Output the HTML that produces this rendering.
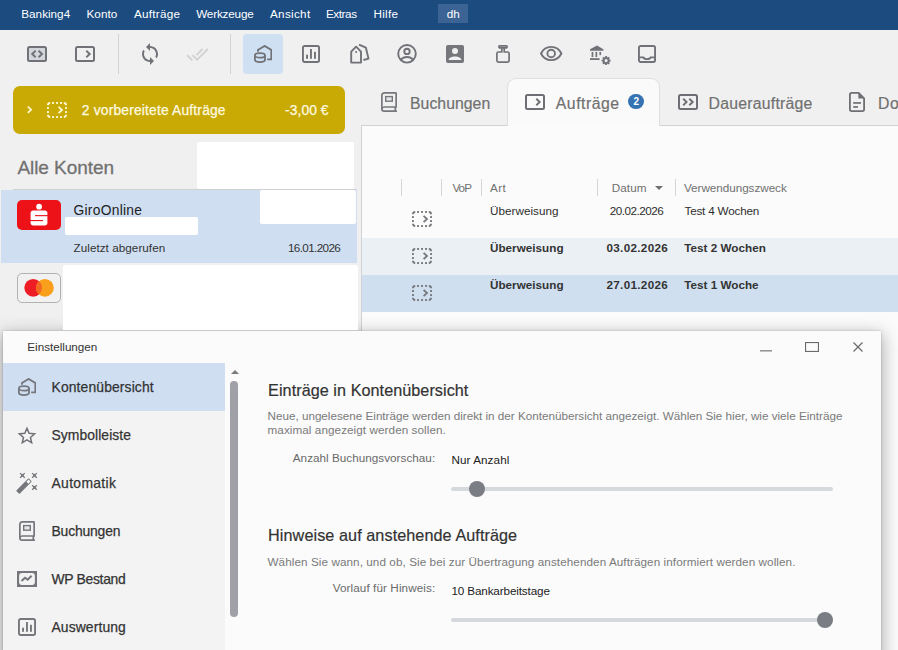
<!DOCTYPE html>
<html lang="de"><head><meta charset="utf-8"><title>Banking4 - Einstellungen</title>
<style>
html,body{margin:0;padding:0}
body{width:898px;height:650px;overflow:hidden;position:relative;background:#f0f0f0;font-family:"Liberation Sans",sans-serif;}
.a{position:absolute}
.t{position:absolute;white-space:nowrap;display:block}
svg{position:absolute;overflow:visible}
#menubar{left:0;top:0;width:898px;height:30px;background:#1c4b80}
#user{left:438px;top:4px;width:30px;height:19px;background:#3b6494}
.tsep{width:1px;top:34px;height:40px;background:#d2d2d2}
#tbsel{left:243px;top:34px;width:40px;height:40px;border-radius:4px;background:#cfe0f3}
#banner{left:13px;top:86px;width:332px;height:48px;border-radius:7px;background:#c9a904}
#panel{left:361px;top:125px;width:540px;height:530px;background:#fbfbfb;border-left:1px solid #d0d2d4;border-top:1px solid #d0d2d4;box-sizing:border-box}
#tabact{left:507px;top:78px;width:153px;height:48px;background:#fafafa;border:1px solid #dedede;border-bottom:none;border-radius:9px 9px 0 0;box-sizing:border-box}
#badge{left:628.3px;top:94px;width:15.3px;height:15.3px;border-radius:50%;background:#3572b2}
.w{background:#fff}
#accsel{left:1px;top:190px;width:356px;height:73px;background:#cfdff1}
#acctop{left:13px;top:189px;width:344px;height:1px;background:#d0d0d0}
#sp{left:17px;top:199.5px;width:44px;height:30.5px;border-radius:5px;background:#ec1217}
#mc{left:17px;top:273px;width:44px;height:30px;border-radius:5px;background:#f1f1f1;border:1px solid #b2b2b2;box-sizing:border-box}
.hsep{width:1px;top:179px;height:17px;background:#d6d6d6}
#row2{left:362px;top:238px;width:540px;height:37px;background:#ebf0f5}
#row3{left:362px;top:275px;width:540px;height:37px;background:#cfdff0}
#dlg{left:3px;top:331px;width:878px;height:330px;background:#fbfbfb;box-shadow:0 5px 16px 2px rgba(0,0,0,.30),0 0 2px rgba(0,0,0,.22)}
#nav{left:3px;top:363px;width:222px;height:300px;background:#f3f3f3}
#navsel{left:3px;top:363px;width:222px;height:48px;background:#cfdff1}
#thumb{left:230px;top:381px;width:8px;height:236px;border-radius:4px;background:#a0a1a8}
.trk{left:451px;width:382px;height:4px;border-radius:2px;background:#d5d8dc}
.knob{width:16px;height:16px;border-radius:50%;background:#7b7d84}
</style></head><body>
<div class="a" id="menubar"></div>
<div class="a" id="user"></div>
<div class="a tsep" style="left:118px"></div>
<div class="a tsep" style="left:230px"></div>
<div class="a" id="tbsel"></div>
<div class="a" id="banner"></div>
<div class="a" id="panel"></div>
<div class="a" id="tabact"></div>
<div class="a" id="badge"></div>
<div class="a" id="acctop"></div>
<div class="a" id="accsel"></div>
<div class="a w" style="left:197px;top:142px;width:157px;height:46.5px;border-radius:2px"></div>
<div class="a w" style="left:260px;top:190px;width:95.5px;height:34px;border-radius:2px"></div>
<div class="a w" style="left:65px;top:216.5px;width:133px;height:18.5px;border-radius:2px"></div>
<div class="a" id="sp"></div>
<div class="a" id="mc"></div>
<div class="a hsep" style="left:401px"></div>
<div class="a hsep" style="left:441px"></div>
<div class="a hsep" style="left:481px"></div>
<div class="a hsep" style="left:597px"></div>
<div class="a hsep" style="left:675px"></div>
<div class="a" id="row2"></div>
<div class="a" id="row3"></div>
<div class="a" id="dlg"></div>
<div class="a w" style="left:63px;top:265px;width:295px;height:65px;border-radius:2px 2px 0 0"></div>
<div class="a" id="nav"></div>
<div class="a" id="navsel"></div>
<div class="a" id="thumb"></div>
<div class="a trk" style="top:487px"></div>
<div class="a knob" style="left:469px;top:481px"></div>
<div class="a trk" style="top:618px"></div>
<div class="a knob" style="left:817px;top:612px"></div>
<svg width="0" height="0" style="position:absolute">
<defs>
<!-- rectangle w/ chevron(s), 20x16 box -->
<symbol id="rc1" viewBox="0 0 20 16"><rect x="1" y="1" width="18" height="14" rx="1.5" fill="none" stroke="currentColor" stroke-width="2"/><path d="M11.3 4.8 14.7 8 11.3 11.2" fill="none" stroke="currentColor" stroke-width="1.9"/></symbol>
<symbol id="rc2" viewBox="0 0 20 16"><rect x="1" y="1" width="18" height="14" rx="1.5" fill="none" stroke="currentColor" stroke-width="2"/><path d="M5.2 4.8 8.6 8 5.2 11.2M11.3 4.8 14.7 8 11.3 11.2" fill="none" stroke="currentColor" stroke-width="1.9"/></symbol>
<symbol id="rc0" viewBox="0 0 20 16"><rect x="1" y="1" width="18" height="14" rx="1.5" fill="#d3d6da" stroke="currentColor" stroke-width="2"/><path d="M8.6 4.8 5.2 8 8.6 11.2M11.6 4.8 15 8 11.6 11.2" fill="none" stroke="currentColor" stroke-width="1.9"/></symbol>
<!-- dotted box w/ chevron 20x16 -->
<symbol id="dot" viewBox="0 0 20 16">
<g fill="currentColor">
<rect x="5.1" y="0" width="1.9" height="1.9"/><rect x="9.1" y="0" width="1.9" height="1.9"/><rect x="13.1" y="0" width="1.9" height="1.9"/>
<rect x="5.1" y="14.1" width="1.9" height="1.9"/><rect x="9.1" y="14.1" width="1.9" height="1.9"/><rect x="13.1" y="14.1" width="1.9" height="1.9"/>
<rect x="0" y="5.1" width="1.9" height="1.9"/><rect x="0" y="9.1" width="1.9" height="1.9"/>
<rect x="18.1" y="5.1" width="1.9" height="1.9"/><rect x="18.1" y="9.1" width="1.9" height="1.9"/>

<g fill="none" stroke="currentColor" stroke-width="1.9"><path d="M.95 3.2A2.3 2.3 0 0 1 3.2 .95M16.8 .95A2.3 2.3 0 0 1 19.05 3.2M19.05 12.8A2.3 2.3 0 0 1 16.8 15.05M3.2 15.05A2.3 2.3 0 0 1 .95 12.8"/>
<path d="M11.6 4.8 15 8 11.6 11.2" stroke-width="1.8"/></g>
</symbol>
<!-- accounts: house + coins, 18x18 -->
<symbol id="acc" viewBox="0 0 18 18"><g fill="none" stroke="currentColor" stroke-width="1.8">
<path d="M3.9 6.700V5.000L10.600 .900 17.300 5.000V14.300H13.200" stroke-linejoin="miter"/>
<ellipse cx="5.950" cy="10.400" rx="5.050" ry="2.250"/>
<path d="M.900 10.400V14.800A5.050 2.250 0 0 0 11.000 14.800V10.400"/>
</g></symbol>
<!-- bar chart in box 18x18 -->
<symbol id="bar" viewBox="0 0 18 18"><rect x=".95" y=".95" width="16.100" height="16.100" rx="1.700" fill="none" stroke="currentColor" stroke-width="1.900"/>
<g fill="currentColor"><rect x="4.1" y="9.7" width="1.9" height="4.1"/><rect x="8.0" y="4.0" width="1.9" height="9.8"/><rect x="12.0" y="6.8" width="1.9" height="7"/></g></symbol>
<!-- book 17x20 -->
<symbol id="book" viewBox="0 0 16 20"><g fill="none" stroke="currentColor" stroke-width="1.7">
<path d="M15.15 .85H3.3A2.45 2.45 0 0 0 .85 3.3V16.7A2.45 2.45 0 0 0 3.3 19.15H15.9"/>
<path d="M15.15 .4V15H3.2A2.3 2.3 0 0 0 .9 16.9"/>
<path d="M14.3 15V19.2"/>
<rect x="4.7" y="4.6" width="6.6" height="4.6" stroke-width="1.4" fill="#e6e7e9"/>
</g></symbol>
</defs></svg>

<!-- toolbar -->

<svg style="left:27px;top:46px;color:#707277" width="20" height="16"><use href="#rc0"/></svg>
<svg style="left:75px;top:46px;color:#707277" width="20" height="16"><use href="#rc1"/></svg>
<!-- sync -->
<svg style="left:138px;top:42px" width="24" height="24" viewBox="0 0 24 24"><path fill="#707277" d="M12 4V1L8 5l4 4V6c3.31 0 6 2.69 6 6 0 1.01-.25 1.97-.7 2.8l1.46 1.46C19.54 15.03 20 13.57 20 12c0-4.42-3.58-8-8-8zm0 14c-3.31 0-6-2.69-6-6 0-1.01.25-1.97.7-2.8L5.24 7.74C4.46 8.970 4 10.43 4 12c0 4.420 3.58 8 8 8v3l4-4-4-4v3z"/></svg>
<!-- done all (disabled) -->
<svg style="left:186.400px;top:42.900px" width="22.9" height="22.9" viewBox="0 0 24 24"><path fill="#d2d2d2" d="M18 7l-1.410-1.410-6.340 6.340 1.410 1.410L18 7zm4.240-1.410L11.660 16.170 7.480 12l-1.410 1.410L11.660 19l12-12-1.420-1.410zM.410 13.410L6 19l1.410-1.410L1.830 12 .410 13.410z"/></svg>
<svg style="left:254px;top:45px;color:#707277" width="18" height="18"><use href="#acc"/></svg>
<svg style="left:302px;top:45px;color:#707277" width="18" height="18"><use href="#bar"/></svg>
<!-- tags -->
<svg style="left:349px;top:43px" width="22" height="22" viewBox="0 0 22 22"><g fill="none" stroke="#707277" stroke-width="1.900" stroke-linejoin="round">
<path d="M2.200 19.600V8.700L7.100 3.700 12.000 8.700V19.600Z"/>
<path d="M10.0 1.6 16.9 4.7 19.5 15.6 14.4 17.0"/>
</g><circle cx="7.1" cy="8.9" r="1" fill="#707277"/></svg>
<!-- account circle -->
<svg style="left:396px;top:43px" width="22" height="22" viewBox="0 0 22 22"><g fill="none" stroke="#707277" stroke-width="1.900">
<circle cx="11" cy="10.800" r="8.800"/><circle cx="11" cy="8.4" r="2.7"/>
<path d="M4.9 17.0C7.0 12.9 15.0 12.9 17.1 17.0"/></g></svg>
<!-- account box -->
<svg style="left:446px;top:45px" width="18" height="18" viewBox="0 0 18 18"><rect width="18" height="18" rx="2" fill="#75777c"/><circle cx="9" cy="5.9" r="3" fill="#f0f0f0"/><path d="M2.6 14.9C2.6 10.2 15.4 10.2 15.4 14.9Z" fill="#f0f0f0"/></svg>
<!-- stamp -->
<svg style="left:496px;top:45px" width="14" height="18" viewBox="0 0 14 18"><g fill="none" stroke="#707277" stroke-width="1.7" stroke-linejoin="round">
<rect x="3.000" y=".900" width="8.000" height="1.900" rx=".600"/>
<path d="M5.800 2.800V7.000H2.400A1.500 1.500 0 0 0 .900 8.500V15.600A1.500 1.500 0 0 0 2.400 17.100H11.600A1.500 1.500 0 0 0 13.100 15.600V8.500A1.500 1.500 0 0 0 11.600 7.000H8.200V2.800"/>
</g></svg>
<!-- eye -->
<svg style="left:540px;top:46px" width="22.400" height="15" viewBox="0 0 22.400 15"><g fill="none" stroke="#707277" stroke-width="1.900">
<path d="M1.000 7.500C5.200 -1.300 17.200 -1.300 21.400 7.500C17.200 16.300 5.200 16.300 1.000 7.500Z"/><circle cx="11.200" cy="7.500" r="3.800"/></g></svg>
<!-- bank + gear -->
<svg style="left:589px;top:45px" width="22" height="21" viewBox="0 0 22 21"><g fill="#707277">
<path d="M8.000 .500 14.400 4.300V5.800H1.000V4.300Z"/>
<rect x="2.600" y="6.900" width="1.700" height="5.200"/><rect x="6.500" y="6.900" width="1.700" height="5.200"/><rect x="10.400" y="6.900" width="1.700" height="3.200"/>
<rect x="1.000" y="13.200" width="9.600" height="1.800"/>
</g><g transform="translate(17.100 15.600)"><circle r="2.500" fill="none" stroke="#707277" stroke-width="1.900"/><g stroke="#707277" stroke-width="1.900"><path d="M0 -4.500V-2.600M0 4.500V2.600M-4.500 0H-2.600M4.500 0H2.600M-3.180 -3.180-1.900 -1.900M3.180 3.180 1.900 1.900M-3.180 3.180-1.900 1.900M3.180 -3.180 1.900 -1.900"/></g></g></svg>
<!-- inbox -->
<svg style="left:638px;top:45px" width="18" height="18" viewBox="0 0 18 18"><g fill="none" stroke="#707277" stroke-width="1.900"><rect x=".950" y=".950" width="16.100" height="16.100" rx="1.700"/><path d="M.9 12.400H5.300C6.200 14.700 11.800 14.700 12.700 12.400H17.100"/></g></svg>


<!-- banner -->
<svg style="left:26.700px;top:106.300px" width="5.200" height="7.400" viewBox="0 0 5.200 7.400"><path d="M.8 .6 4.200 3.700 .8 6.800" fill="none" stroke="#fff7cf" stroke-width="1.700"/></svg>
<svg style="left:47px;top:102px;color:#fffbd6" width="20" height="16"><use href="#dot"/></svg>

<!-- tabs -->
<svg style="left:381px;top:92px;color:#75777c" width="16" height="20"><use href="#book"/></svg>
<svg style="left:525px;top:94px;color:#6d6f74" width="20" height="16"><use href="#rc1"/></svg>
<svg style="left:678px;top:94px;color:#6d6f74" width="20" height="16"><use href="#rc2"/></svg>
<svg style="left:849px;top:92px" width="16" height="20" viewBox="0 0 16 20"><path d="M9.700 .900H2.700A1.800 1.800 0 0 0 .900 2.700V17.300A1.800 1.800 0 0 0 2.700 19.100H13.300A1.800 1.800 0 0 0 15.100 17.300V6.300Z" fill="none" stroke="#6d6f74" stroke-width="1.800" stroke-linejoin="round"/><path d="M9.400 .9 15.100 6.600H9.400Z" fill="#6d6f74"/><rect x="4.200" y="10.100" width="7.800" height="1.700" fill="#6d6f74"/><rect x="4.200" y="14.100" width="4.800" height="1.700" fill="#6d6f74"/></svg>

<!-- sparkasse -->
<svg style="left:17px;top:199.500px" width="44" height="30" viewBox="0 0 44 30"><circle cx="22.100" cy="6.700" r="2.900" fill="#fff"/><rect x="13.600" y="10.600" width="16.800" height="14.800" rx="2.600" fill="#fff"/><rect x="18" y="15.100" width="13" height="1.100" fill="#ec1217"/><rect x="13" y="20.000" width="13.100" height="1.100" fill="#ec1217"/></svg>
<!-- mastercard -->
<svg style="left:17px;top:273px" width="44" height="30" viewBox="0 0 44 30"><circle cx="16.2" cy="14.8" r="8.9" fill="#ee1c25"/><circle cx="27.9" cy="14.8" r="8.9" fill="#f99f1b"/><path d="M22.05 8.09A8.9 8.9 0 0 1 22.05 21.51A8.9 8.9 0 0 1 22.05 8.09Z" fill="#f26a22"/></svg>

<!-- table -->
<svg style="left:655px;top:186px" width="8" height="4" viewBox="0 0 8 4"><path d="M0 0H8L4 4Z" fill="#707070"/></svg>
<svg style="left:412px;top:211px;color:#76787c" width="20" height="16"><use href="#dot"/></svg>
<svg style="left:412px;top:248px;color:#76787c" width="20" height="16"><use href="#dot"/></svg>
<svg style="left:412px;top:285px;color:#76787c" width="20" height="16"><use href="#dot"/></svg>
<!-- dialog window buttons -->
<svg style="left:760px;top:349.500px" width="12" height="2" viewBox="0 0 12 2"><rect y=".3" width="12" height="1.100" fill="#6a6a6a"/></svg>
<svg style="left:805px;top:342px" width="14" height="10" viewBox="0 0 14 10"><rect x=".550" y=".550" width="12.900" height="8.900" fill="none" stroke="#6a6a6a" stroke-width="1.100"/></svg>
<svg style="left:853px;top:341.900px" width="10" height="10" viewBox="0 0 10 10"><path d="M.5 .5 9.500 9.500M9.500 .5 .5 9.500" fill="none" stroke="#6a6a6a" stroke-width="1.200"/></svg>
<!-- scrollbar arrow -->
<svg style="left:230.500px;top:370px" width="8" height="4" viewBox="0 0 8 4"><path d="M0 4H8L4 0Z" fill="#7b7b7b"/></svg>
<!-- nav icons -->
<svg style="left:18px;top:378px;color:#75777c" width="18" height="18"><use href="#acc"/></svg>
<svg style="left:16.900px;top:425.500px" width="20" height="19" viewBox="0 0 20 19"><path d="M9.95 2.30 12.11 7.32 17.56 7.83 13.45 11.44 14.65 16.77 9.95 13.98 5.25 16.77 6.45 11.44 2.34 7.83 7.79 7.32Z" fill="none" stroke="#707277" stroke-width="1.500" stroke-linejoin="miter"/></svg>
<!-- wand -->
<svg style="left:15px;top:472px" width="22" height="22" viewBox="0 0 22 22"><g transform="translate(8.950 14.100) rotate(-45)"><rect x="-8.850" y="-2.350" width="17.700" height="4.700" rx=".8" fill="#75777c"/><rect x="4.800" y="-1.350" width="3.100" height="2.700" fill="#fafafa"/></g>
<g fill="none" stroke="#75777c" stroke-width="1.300"><path d="M5.10 1.10L9.70 5.70M9.70 1.10L5.10 5.70"/><rect x="6.40" y="2.40" width="2" height="2" fill="#75777c" stroke="none" transform="rotate(45 7.4 3.4)"/><path d="M17.20 1.10L21.80 5.70M21.80 1.10L17.20 5.70"/><rect x="18.50" y="2.40" width="2" height="2" fill="#75777c" stroke="none" transform="rotate(45 19.5 3.4)"/><path d="M17.20 13.20L21.80 17.80M21.80 13.20L17.20 17.80"/><rect x="18.50" y="14.50" width="2" height="2" fill="#75777c" stroke="none" transform="rotate(45 19.5 15.5)"/></g></svg>
<svg style="left:19px;top:521px;color:#75777c" width="16" height="20"><use href="#book"/></svg>
<!-- wp bestand -->
<svg style="left:17px;top:571px" width="20" height="16" viewBox="0 0 20 16"><path fill="#75777c" fill-rule="evenodd" d="M0 0H20V16H0ZM2.100 5A2.900 2.900 0 0 1 5 2.100H15A2.900 2.900 0 0 1 17.900 5V11A2.900 2.900 0 0 1 15 13.900H5A2.900 2.900 0 0 1 2.100 11Z"/><path d="M4.500 9.900 8.000 6.700 10.700 8.600 14.600 4.700" fill="none" stroke="#75777c" stroke-width="2"/></svg>
<svg style="left:18px;top:618px;color:#75777c" width="18" height="18"><use href="#bar"/></svg>

<span class="t" style="left:21.30px;top:6.00px;font-size:11.7px;line-height:16px;letter-spacing:0.014px;color:#ffffff;">Banking4</span>
<span class="t" style="left:86.50px;top:6.00px;font-size:11.7px;line-height:16px;letter-spacing:0.050px;color:#ffffff;">Konto</span>
<span class="t" style="left:134.00px;top:6.00px;font-size:11.7px;line-height:16px;letter-spacing:0.250px;color:#ffffff;">Aufträge</span>
<span class="t" style="left:196.20px;top:6.00px;font-size:11.7px;line-height:16px;letter-spacing:-0.169px;color:#ffffff;">Werkzeuge</span>
<span class="t" style="left:270.00px;top:6.00px;font-size:11.7px;line-height:16px;letter-spacing:0.308px;color:#ffffff;">Ansicht</span>
<span class="t" style="left:326.00px;top:6.00px;font-size:11.7px;line-height:16px;letter-spacing:-0.430px;color:#ffffff;">Extras</span>
<span class="t" style="left:373.40px;top:6.00px;font-size:11.7px;line-height:16px;letter-spacing:0.300px;color:#ffffff;">Hilfe</span>
<span class="t" style="left:446.70px;top:6.00px;font-size:11.7px;line-height:16px;letter-spacing:0.100px;color:#ffffff;">dh</span>
<span class="t" style="left:81.80px;top:101.00px;font-size:13.8px;line-height:19px;letter-spacing:0.189px;color:#fffbe0;-webkit-text-stroke:0.25px #fffbe0;">2 vorbereitete Aufträge</span>
<span class="t" style="left:285.00px;top:101.00px;font-size:13.8px;line-height:19px;letter-spacing:0.092px;color:#fffbe0;-webkit-text-stroke:0.25px #fffbe0;">-3,00 €</span>
<span class="t" style="left:410.00px;top:93.00px;font-size:15.8px;line-height:22px;letter-spacing:0.031px;color:#707070;-webkit-text-stroke:0.2px #707070;">Buchungen</span>
<span class="t" style="left:555.80px;top:93.00px;font-size:15.8px;line-height:22px;letter-spacing:0.507px;color:#707070;-webkit-text-stroke:0.2px #707070;">Aufträge</span>
<span class="t" style="left:633.60px;top:95.00px;font-size:10px;line-height:14px;letter-spacing:0.000px;color:#ffffff;font-weight:700;">2</span>
<span class="t" style="left:708.50px;top:93.00px;font-size:15.8px;line-height:22px;letter-spacing:0.242px;color:#707070;-webkit-text-stroke:0.2px #707070;">Daueraufträge</span>
<span class="t" style="left:878.10px;top:93.00px;font-size:15.8px;line-height:22px;letter-spacing:0.387px;color:#707070;-webkit-text-stroke:0.2px #707070;">Dokumente</span>
<span class="t" style="left:17.40px;top:154.00px;font-size:19px;line-height:27px;letter-spacing:-0.060px;color:#717171;-webkit-text-stroke:0.3px #717171;">Alle Konten</span>
<span class="t" style="left:73.50px;top:201.00px;font-size:13.8px;line-height:19px;letter-spacing:0.283px;color:#222;">GiroOnline</span>
<span class="t" style="left:73.50px;top:240.00px;font-size:11.7px;line-height:16px;letter-spacing:0.047px;color:#333;">Zuletzt abgerufen</span>
<span class="t" style="left:288.00px;top:240.00px;font-size:11.7px;line-height:16px;letter-spacing:-0.639px;color:#333;">16.01.2026</span>
<span class="t" style="left:452.40px;top:180.00px;font-size:11.7px;line-height:16px;letter-spacing:-0.925px;color:#707070;">VoP</span>
<span class="t" style="left:490.00px;top:180.00px;font-size:11.7px;line-height:16px;letter-spacing:0.375px;color:#707070;">Art</span>
<span class="t" style="left:611.70px;top:180.00px;font-size:11.7px;line-height:16px;letter-spacing:0.087px;color:#707070;">Datum</span>
<span class="t" style="left:684.00px;top:180.00px;font-size:11.7px;line-height:16px;letter-spacing:-0.037px;color:#707070;">Verwendungszweck</span>
<span class="t" style="left:490.00px;top:203.00px;font-size:11.7px;line-height:16px;letter-spacing:0.030px;color:#2e2e2e;">Überweisung</span>
<span class="t" style="left:609.70px;top:203.00px;font-size:11.7px;line-height:16px;letter-spacing:-0.494px;color:#2e2e2e;">20.02.2026</span>
<span class="t" style="left:684.50px;top:203.00px;font-size:11.7px;line-height:16px;letter-spacing:-0.192px;color:#2e2e2e;">Test 4 Wochen</span>
<span class="t" style="left:490.00px;top:240.00px;font-size:11.7px;line-height:16px;letter-spacing:0.015px;color:#333;font-weight:700;">Überweisung</span>
<span class="t" style="left:606.50px;top:240.00px;font-size:11.7px;line-height:16px;letter-spacing:0.306px;color:#333;font-weight:700;">03.02.2026</span>
<span class="t" style="left:684.30px;top:240.00px;font-size:11.7px;line-height:16px;letter-spacing:0.008px;color:#333;font-weight:700;">Test 2 Wochen</span>
<span class="t" style="left:490.00px;top:277.00px;font-size:11.7px;line-height:16px;letter-spacing:0.015px;color:#333;font-weight:700;">Überweisung</span>
<span class="t" style="left:606.50px;top:277.00px;font-size:11.7px;line-height:16px;letter-spacing:0.306px;color:#333;font-weight:700;">27.01.2026</span>
<span class="t" style="left:684.30px;top:277.00px;font-size:11.7px;line-height:16px;letter-spacing:0.005px;color:#333;font-weight:700;">Test 1 Woche</span>
<span class="t" style="left:27.30px;top:339.00px;font-size:11.7px;line-height:16px;letter-spacing:-0.012px;color:#333;">Einstellungen</span>
<span class="t" style="left:51.50px;top:378.00px;font-size:13.9px;line-height:19px;letter-spacing:0.125px;color:#333;-webkit-text-stroke:0.25px #333;">Kontenübersicht</span>
<span class="t" style="left:51.50px;top:426.00px;font-size:13.9px;line-height:19px;letter-spacing:0.064px;color:#333;-webkit-text-stroke:0.25px #333;">Symbolleiste</span>
<span class="t" style="left:51.50px;top:474.00px;font-size:13.9px;line-height:19px;letter-spacing:0.331px;color:#333;-webkit-text-stroke:0.25px #333;">Automatik</span>
<span class="t" style="left:51.50px;top:522.00px;font-size:13.9px;line-height:19px;letter-spacing:-0.169px;color:#333;-webkit-text-stroke:0.25px #333;">Buchungen</span>
<span class="t" style="left:51.50px;top:570.00px;font-size:13.9px;line-height:19px;letter-spacing:-0.300px;color:#333;-webkit-text-stroke:0.25px #333;">WP Bestand</span>
<span class="t" style="left:51.50px;top:618.00px;font-size:13.9px;line-height:19px;letter-spacing:0.100px;color:#333;-webkit-text-stroke:0.25px #333;">Auswertung</span>
<span class="t" style="left:268.10px;top:379.00px;font-size:16.2px;line-height:23px;letter-spacing:0.054px;color:#333;-webkit-text-stroke:0.2px #333;">Einträge in Kontenübersicht</span>
<span class="t" style="left:267.50px;top:408.00px;font-size:11.7px;line-height:16px;letter-spacing:-0.007px;color:#7a7a7a;">Neue, ungelesene Einträge werden direkt in der Kontenübersicht angezeigt. Wählen Sie hier, wie viele Einträge</span>
<span class="t" style="left:267.50px;top:422.00px;font-size:11.7px;line-height:16px;letter-spacing:0.073px;color:#7a7a7a;">maximal angezeigt werden sollen.</span>
<span class="t" style="left:292.80px;top:450.00px;font-size:11.7px;line-height:16px;letter-spacing:0.030px;color:#6a6a6a;">Anzahl Buchungsvorschau:</span>
<span class="t" style="left:451.40px;top:452.00px;font-size:11.7px;line-height:16px;letter-spacing:0.083px;color:#222;">Nur Anzahl</span>
<span class="t" style="left:268.10px;top:524.00px;font-size:16.2px;line-height:23px;letter-spacing:0.079px;color:#333;-webkit-text-stroke:0.2px #333;">Hinweise auf anstehende Aufträge</span>
<span class="t" style="left:267.50px;top:554.00px;font-size:11.7px;line-height:16px;letter-spacing:0.079px;color:#7a7a7a;">Wählen Sie wann, und ob, Sie bei zur Übertragung anstehenden Aufträgen informiert werden wollen.</span>
<span class="t" style="left:332.70px;top:580.00px;font-size:11.7px;line-height:16px;letter-spacing:0.095px;color:#6a6a6a;">Vorlauf für Hinweis:</span>
<span class="t" style="left:451.40px;top:583.00px;font-size:11.7px;line-height:16px;letter-spacing:-0.129px;color:#222;">10 Bankarbeitstage</span>
</body></html>
